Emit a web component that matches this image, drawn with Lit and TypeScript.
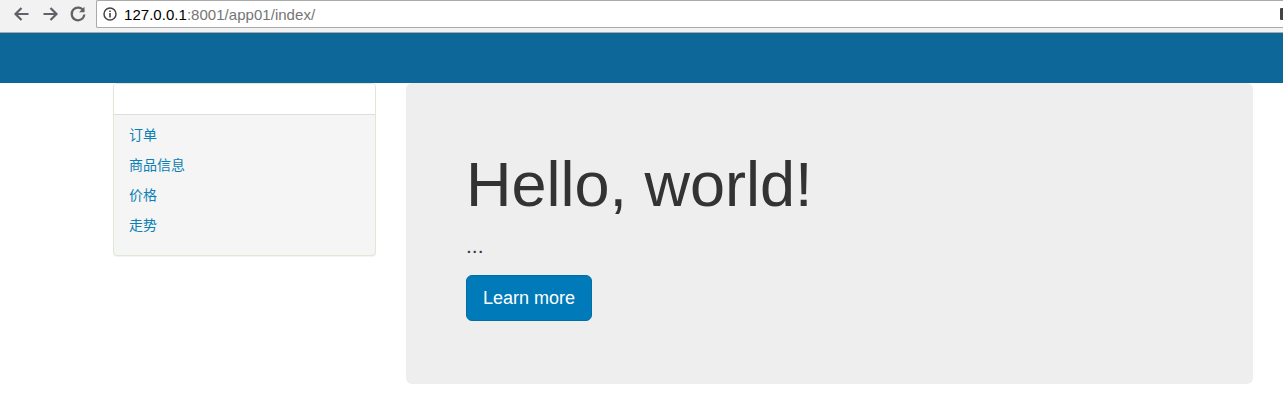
import { LitElement, html, css } from "lit";
import { customElement } from "lit/decorators.js";

@customElement("app-root")
export class AppRoot extends LitElement {
  static styles = css`
    :host { display: block; width: 1283px; height: 408px; background: #fff; overflow: hidden; font-family: "Liberation Sans", Arial, sans-serif; }
    .chrome { height: 33px; box-sizing: border-box; background: #f2f2f2; border-bottom: 1px solid #a9a9a9; display: flex; align-items: flex-start; }
    .navs { width: 96px; flex: none; display: flex; gap: 8px; padding: 4px 0 0 12px; box-sizing: border-box; }
    .navs svg { width: 20px; height: 20px; display: block; }
    .omni { flex: 1; height: 28px; box-sizing: border-box; background: #fff; border: 1px solid #a9a9a9; border-right: none; border-radius: 2px 0 0 2px; display: flex; align-items: center; padding-left: 5px; font-size: 15px; letter-spacing: 0.035px; color: #757575; position: relative; }
    .omni svg { width: 16px; height: 16px; margin-right: 6px; flex: none; }
    .host { color: #000; }
    .ext { position: absolute; right: 0; top: 7px; width: 3px; height: 12px; background: #444; border-radius: 1px 0 0 1px; }
    .navbar { height: 50px; background: #0d6899; }
    .main { display: flex; align-items: flex-start; padding-left: 113px; gap: 30px; }
    .panel { width: 263px; box-sizing: border-box; height: 173px; background: #f5f5f5; border: 1px solid #dde8d6; border-radius: 4px; box-shadow: 0 1px 1px rgba(0,0,0,.05); overflow: hidden; }
    .head { height: 30px; background: #fff; border-bottom: 1px solid #ddd; }
    .list { list-style: none; margin: 0; padding: 4px 15px 0; }
    .list li { height: 30px; line-height: 30px; font-size: 14px; color: #0a80b4; font-family: "Noto Sans CJK SC", sans-serif; }
    .jumbo { width: 847px; height: 301px; box-sizing: border-box; background: #eee; border-radius: 6px; padding: 60px; }
    h1 { margin: 7px 0 0; font-size: 63px; font-weight: 400; line-height: 1.1; color: #333; }
    p { margin: 12px 0 0; font-size: 21px; line-height: 30px; color: #333; height: 32px; }
    .btn { display: inline-flex; margin-top: 12px; width: 126px; height: 46px; box-sizing: border-box; align-items: center; justify-content: center; background: #007ab8; border: 1px solid #006da4; border-radius: 6px; color: #fff; font-size: 18px; }
  `;

  render() {
    return html`
      <div class="chrome">
        <div class="navs">
          <svg viewBox="0 0 20 20" fill="none" stroke="#5f6368" stroke-width="2.2"><path d="M16.5 10H4M9.5 4L3.5 10l6 6"/></svg>
          <svg viewBox="0 0 20 20" fill="none" stroke="#5f6368" stroke-width="2.2"><path d="M3.5 10H16M10.5 4l6 6-6 6"/></svg>
          <svg viewBox="0 0 20 20" fill="none" stroke="#5f6368" stroke-width="2.2"><path d="M15.6 7A6.3 6.3 0 1 0 16.3 10.5"/><path d="M16.5 2.8v5.4h-5.4" fill="#5f6368" stroke="none"/></svg>
        </div>
        <div class="omni">
          <svg viewBox="0 0 16 16"><circle cx="8" cy="8" r="6" fill="none" stroke="#444" stroke-width="1.5"/><path d="M7.2 7h1.6v4.5H7.2zM7.2 4.4h1.6V6H7.2z" fill="#444"/></svg>
          <span><span class="host">127.0.0.1</span>:8001/app01/index/</span>
          <span class="ext"></span>
        </div>
      </div>
      <div class="navbar"></div>
      <div class="main">
        <div class="panel">
          <div class="head"></div>
          <ul class="list"><li>订单</li><li>商品信息</li><li>价格</li><li>走势</li></ul>
        </div>
        <div class="jumbo">
          <h1>Hello, world!</h1>
          <p>...</p>
          <span class="btn">Learn more</span>
        </div>
      </div>
    `;
  }
}
